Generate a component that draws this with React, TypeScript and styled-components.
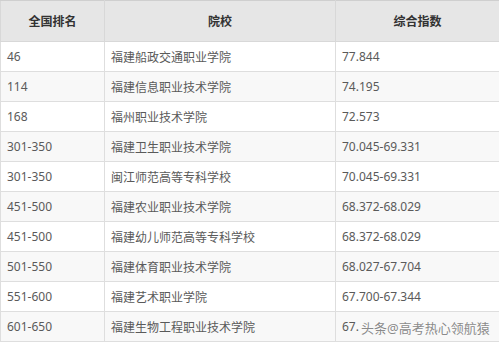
import React from "react";
import styled, { createGlobalStyle } from "styled-components";

const GlobalStyle = createGlobalStyle`
  html, body {
    margin: 0;
    padding: 0;
    background: #fff;
  }
  body {
    font-family: "Noto Sans", "Noto Sans CJK SC", sans-serif;
  }
`;

const rows = [
  { rank: "46", school: "福建船政交通职业学院", score: "77.844" },
  { rank: "114", school: "福建信息职业技术学院", score: "74.195" },
  { rank: "168", school: "福州职业技术学院", score: "72.573" },
  { rank: "301-350", school: "福建卫生职业技术学院", score: "70.045-69.331" },
  { rank: "301-350", school: "闽江师范高等专科学校", score: "70.045-69.331" },
  { rank: "451-500", school: "福建农业职业技术学院", score: "68.372-68.029" },
  { rank: "451-500", school: "福建幼儿师范高等专科学校", score: "68.372-68.029" },
  { rank: "501-550", school: "福建体育职业技术学院", score: "68.027-67.704" },
  { rank: "551-600", school: "福建艺术职业学院", score: "67.700-67.344" },
  { rank: "601-650", school: "福建生物工程职业技术学院", score: "67." },
];

const Wrap = styled.div`
  width: 499px;
  height: 344px;
  position: relative;
  overflow: hidden;
`;

const Table = styled.table`
  width: 499px;
  border-collapse: collapse;
  table-layout: fixed;
  font-size: 12px;
  color: #5a5a5a;
`;

const Head = styled.th`
  height: 40px;
  padding: 0;
  background: #e6e6e6;
  color: #333;
  font-weight: bold;
  text-align: center;
  border: 1px solid #d8d8d8;
  border-top: 1px solid #cfcfcf;
`;

const Row = styled.tr<{ $alt: boolean }>`
  background: ${(p) => (p.$alt ? "#f8f8f8" : "#fff")};
`;

const Cell = styled.td`
  height: 29px;
  padding: 0 0 0 6px;
  border: 1px solid #dedede;
  white-space: nowrap;
  overflow: hidden;
  position: relative;
`;

const Watermark = styled.span`
  position: absolute;
  left: 25px;
  top: 50%;
  transform: translateY(-50%);
  font-size: 13px;
  color: #8a8a8a;
  letter-spacing: 0;
  text-shadow: 0 0 1px #fff, 0 0 2px #fff;
`;

export default function App() {
  return (
    <Wrap>
      <GlobalStyle />
      <Table>
        <colgroup>
          <col style={{ width: 104 }} />
          <col style={{ width: 231 }} />
          <col style={{ width: 164 }} />
        </colgroup>
        <thead>
          <tr>
            <Head>全国排名</Head>
            <Head>院校</Head>
            <Head>综合指数</Head>
          </tr>
        </thead>
        <tbody>
          {rows.map((r, i) => (
            <Row key={i} $alt={i % 2 === 1}>
              <Cell>{r.rank}</Cell>
              <Cell>{r.school}</Cell>
              <Cell>
                {r.score}
                {i === rows.length - 1 && <Watermark>头条@高考热心领航猿</Watermark>}
              </Cell>
            </Row>
          ))}
        </tbody>
      </Table>
    </Wrap>
  );
}
